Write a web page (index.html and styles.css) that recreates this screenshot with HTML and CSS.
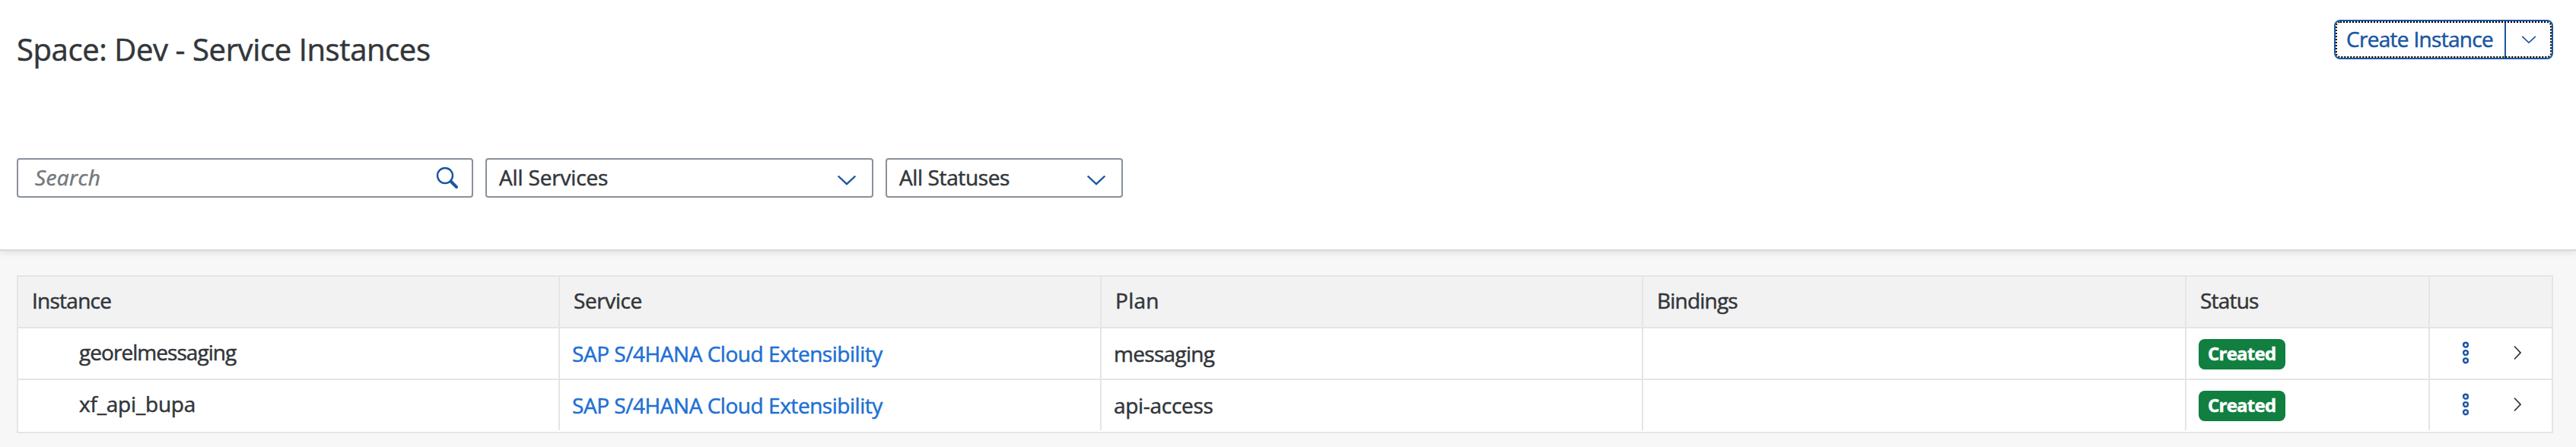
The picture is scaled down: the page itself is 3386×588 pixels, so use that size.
FILE: index.html
```html
<!DOCTYPE html>
<html lang="en">
<head>
<meta charset="utf-8">
<title>Service Instances</title>
<link rel="stylesheet" href="styles.css">
</head>
<body>
<header class="page-header">
  <div class="title-bar">
    <h1 class="title">Space: Dev - Service Instances</h1>
    <div class="split-button">
      <button class="split-main">Create Instance</button>
      <button class="split-arrow" aria-label="More"><svg width="20" height="12" viewBox="0 0 20 12"><path d="M1.200 1.800 10 10.200 18.800 1.800"/></svg></button>
    </div>
  </div>
  <div class="filters">
    <div class="field search"><span>Search</span>
      <svg width="30" height="30" viewBox="0 0 30 30"><circle cx="12" cy="12" r="10"/><path class="handle" d="M19.500 19.500 27 27"/></svg>
    </div>
    <div class="field services"><span>All Services</span><svg class="arrow" width="26" height="16" viewBox="0 0 26 16"><path d="M1.700 2.500 13 13.200 24.300 2.500"/></svg></div>
    <div class="field statuses"><span>All Statuses</span><svg class="arrow" width="26" height="16" viewBox="0 0 26 16"><path d="M1.700 2.500 13 13.200 24.300 2.500"/></svg></div>
  </div>
</header>
<main class="content">
  <div class="table">
    <div class="row head">
      <div class="cell col-instance">Instance</div>
      <div class="cell col-service">Service</div>
      <div class="cell col-plan">Plan</div>
      <div class="cell col-bindings">Bindings</div>
      <div class="cell col-status">Status</div>
      <div class="cell"></div>
    </div>
    <div class="row">
      <div class="cell name messaging-name">georelmessaging</div>
      <div class="cell value"><a class="link">SAP S/4HANA Cloud Extensibility</a></div>
      <div class="cell value messaging-plan">messaging</div>
      <div class="cell"></div>
      <div class="cell state"><span class="badge">Created</span></div>
      <div class="cell actions">
        <svg width="10" height="30" viewBox="0 0 10 30"><circle cx="5" cy="4.700" r="2.900"/><circle cx="5" cy="15" r="2.900"/><circle cx="5" cy="25.300" r="2.900"/></svg>
        <svg class="nav" width="12" height="20" viewBox="0 0 12 20"><path d="M2 1.500 10 10 2 18.500"/></svg>
      </div>
    </div>
    <div class="row last">
      <div class="cell name api-name">xf_api_bupa</div>
      <div class="cell value"><a class="link">SAP S/4HANA Cloud Extensibility</a></div>
      <div class="cell value api-plan">api-access</div>
      <div class="cell"></div>
      <div class="cell state"><span class="badge">Created</span></div>
      <div class="cell actions">
        <svg width="10" height="30" viewBox="0 0 10 30"><circle cx="5" cy="4.700" r="2.900"/><circle cx="5" cy="15" r="2.900"/><circle cx="5" cy="25.300" r="2.900"/></svg>
        <svg class="nav" width="12" height="20" viewBox="0 0 12 20"><path d="M2 1.500 10 10 2 18.500"/></svg>
      </div>
    </div>
  </div>
</main>
</body>
</html>
```
FILE: styles.css
```css
* { box-sizing: border-box; }
body { margin: 0; height: 588px; overflow: hidden; background: #f7f7f7; color: #32363a; font-family: "Open Sans", "Liberation Sans", sans-serif; font-size: 28px; line-height: 34px; -webkit-text-stroke: .5px currentColor; }
svg { display: block; flex: none; fill: none; stroke: #1a56a2; stroke-width: 2.400; }
.page-header { height: 330px; padding: 26px 30px 0 22px; background: #fff; border-bottom: 2px solid #d9d9d9; box-shadow: 0 2px 8px rgba(0, 0, 0, .1); }
.title-bar { display: flex; justify-content: space-between; align-items: flex-start; height: 182px; }
.title { margin: 13px 0 0; font-size: 40px; font-weight: 400; line-height: 51px; letter-spacing: -.4px; }
.split-button { display: flex; width: 288px; height: 52px; border: 2px solid #1a56a2; border-radius: 8px; outline: 2px dotted #000; outline-offset: -4px; }
.split-button button { background: none; border: 0; font: inherit; color: #1a56a2; padding: 0; }
.split-button .split-main { width: 222px; text-align: left; padding: 0 0 2px 14px; letter-spacing: -.7px; white-space: nowrap; }
.split-button .split-arrow { flex: 1; border-left: 2px solid #1a56a2; display: flex; align-items: center; justify-content: center; }
.split-arrow svg { stroke-width: 1.600; }
.filters { display: flex; gap: 16px; }
.field { display: flex; align-items: center; justify-content: space-between; height: 52px; border: 2px solid #89919a; border-radius: 4px; padding: 0 20px 0 16px; }
.field span { padding-bottom: 2px; }
.search { width: 600px; padding: 0 17px 0 22px; font-style: italic; color: #74777a; letter-spacing: .4px; }
.search .handle { stroke-width: 4; stroke-linecap: round; }
.services { width: 510px; letter-spacing: -.16px; }
.statuses { width: 312px; letter-spacing: -.38px; }
.arrow { margin-top: 6px; }
.content { padding: 32px 30px 0 22px; }
.table { border: 2px solid #e5e5e5; background: #fff; }
.row { display: grid; grid-template-columns: 712px 712px 712px 714px 320px 160px; height: 68px; border-bottom: 2px solid #e5e5e5; }
.row.last { border-bottom: 0; }
.head { background: #f2f2f2; }
.cell { display: flex; align-items: center; border-right: 2px solid #e5e5e5; padding: 0 0 4px 18px; height: 66px; }
.cell:last-child { border-right: 0; }
.cell.name { padding-left: 80px; }
.cell.value { padding: 0 0 0 16px; }
.col-instance { letter-spacing: -.75px; }
.col-service { letter-spacing: -.4px; }
.col-plan { letter-spacing: .3px; }
.col-bindings, .col-status { letter-spacing: -.8px; }
.messaging-name { letter-spacing: -.95px; }
.messaging-plan { letter-spacing: -.7px; }
.api-name { letter-spacing: -.2px; }
.api-plan { letter-spacing: -.3px; }
.link { color: #2070d3; letter-spacing: -.46px; }
.cell.state { padding: 2px 0 0 16px; }
.badge { width: 114px; height: 40px; border-radius: 8px; background: #107f40; color: #fff; font-size: 24px; font-weight: 700; line-height: 37px; padding-left: 12px; letter-spacing: -.75px; }
.cell.actions { padding: 0 39px 2px 42px; justify-content: space-between; }
.nav { stroke: #32363a; stroke-width: 1.800; }
```
